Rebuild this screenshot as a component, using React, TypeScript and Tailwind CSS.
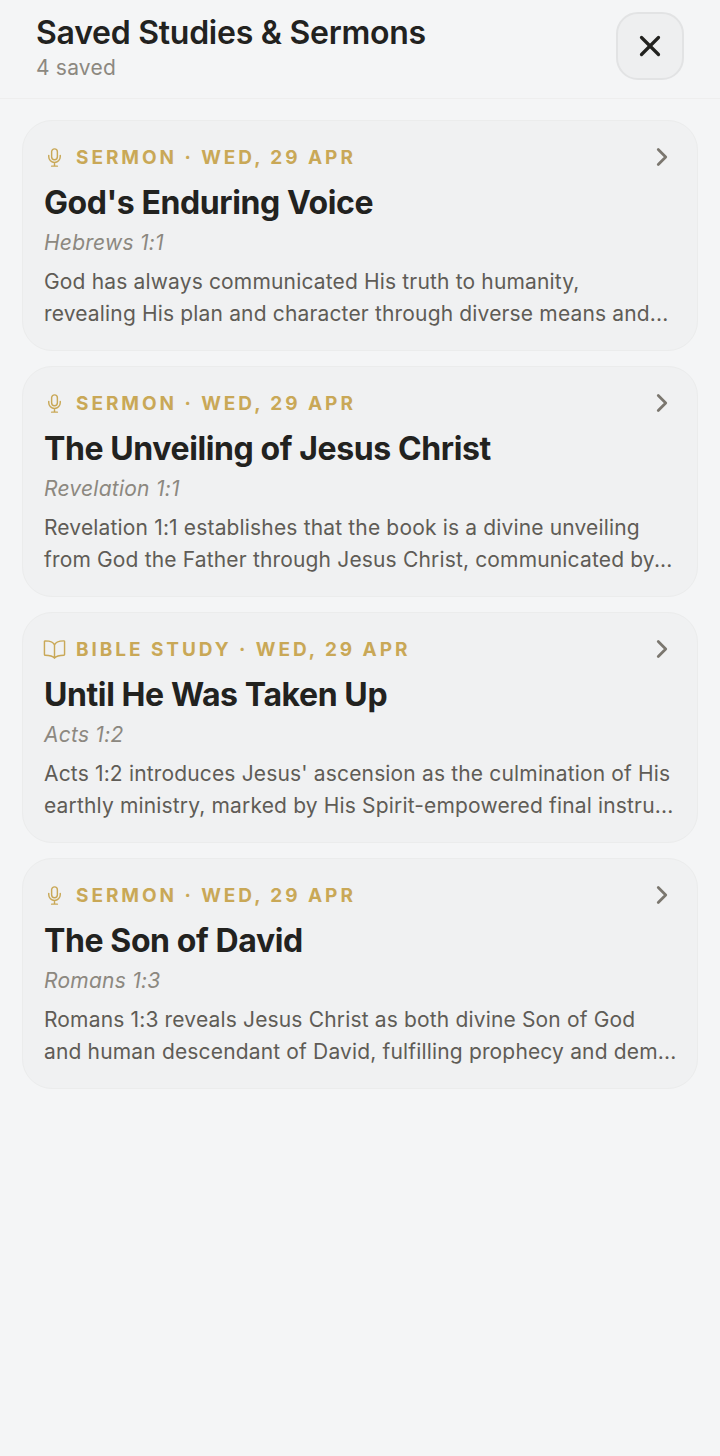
import { ChevronRight, X } from 'lucide-react';
import { IoBookOutline, IoMicOutline } from 'react-icons/io5';

const items = [
  {
    kind: 'SERMON',
    title: "God's Enduring Voice",
    ref: 'Hebrews 1:1',
    line1: 'God has always communicated His truth to humanity,',
    line2: 'revealing His plan and character through diverse means and...',
  },
  {
    kind: 'SERMON',
    title: 'The Unveiling of Jesus Christ',
    ref: 'Revelation 1:1',
    line1: 'Revelation 1:1 establishes that the book is a divine unveiling',
    line2: 'from God the Father through Jesus Christ, communicated by...',
  },
  {
    kind: 'BIBLE STUDY',
    title: 'Until He Was Taken Up',
    ref: 'Acts 1:2',
    line1: "Acts 1:2 introduces Jesus' ascension as the culmination of His",
    line2: 'earthly ministry, marked by His Spirit-empowered final instru...',
  },
  {
    kind: 'SERMON',
    title: 'The Son of David',
    ref: 'Romans 1:3',
    line1: 'Romans 1:3 reveals Jesus Christ as both divine Son of God',
    line2: 'and human descendant of David, fulfilling prophecy and dem...',
  },
];

export default function App() {
  return (
    <div className="min-h-[1456px] bg-[#f4f5f6] font-['Inter',sans-serif]">
      <header className="flex h-[99px] items-start justify-between border-b border-[#eeeeee] pl-[36px] pr-[36px] pt-[12px]">
        <div>
          <h1 className="text-[32px] leading-[42px] font-semibold tracking-[-0.26px] text-[#22221f]">Saved Studies &amp; Sermons</h1>
          <p className="mt-[1px] text-[21px] leading-[26px] tracking-[0.2px] text-[#8c8880]">4 saved</p>
        </div>
        <button className="flex h-[68px] w-[68px] items-center justify-center rounded-[22px] border-2 border-[#e2e3e4] bg-[#eeeff0]">
          <X size={34} strokeWidth={2.3} className="text-[#22221f]" />
        </button>
      </header>

      <div className="flex flex-col gap-[15px] px-[22px] pt-[21px]">
        {items.map((item, i) => (
          <div key={i} className="h-[231px] rounded-[30px] border border-[#ebecec] bg-[#f0f1f2] pl-[21px] pr-[20px] pt-[22px]">
            <div className="flex h-[28px] items-center">
              <span className="flex w-[21px] items-center justify-center text-[#c9a857]">
                {item.kind === 'SERMON' ? <IoMicOutline size={23} className="shrink-0" /> : <IoBookOutline size={23} className="shrink-0" />}
              </span>
              <span className="ml-[11px] translate-y-[1px] text-[19px] font-bold tracking-[2.95px] text-[#c9a857]">
                {item.kind} · WED, 29 APR
              </span>
              <ChevronRight size={30} strokeWidth={2.2} className="ml-auto text-[#7b776f]" />
            </div>
            <h2 className="mt-[12px] text-[32px] leading-[40px] font-bold tracking-[-0.4px] text-[#22221f]">{item.title}</h2>
            <p className="mt-[6px] text-[21px] leading-[28px] tracking-[0.24px] italic text-[#8c8880]">{item.ref}</p>
            <p className="mt-[9px] whitespace-nowrap text-[21px] leading-[32px] tracking-[0.16px] text-[#5f5c56]">
              {item.line1}
              <br />
              {item.line2}
            </p>
          </div>
        ))}
      </div>
    </div>
  );
}
